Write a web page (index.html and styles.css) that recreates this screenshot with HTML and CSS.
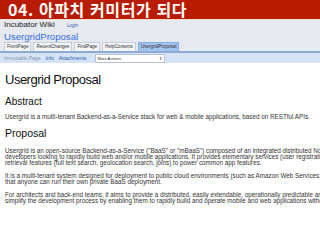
FILE: index.html
```html
<!DOCTYPE html>
<html lang="ko">
<head>
  <meta charset="UTF-8">
  <meta name="viewport" content="width=device-width, initial-scale=1.0">
  <title>04. 아파치 커미터가 되다</title>
  <link rel="stylesheet" href="styles.css">
</head>
<body>
  <div class="banner">04. 아파치 커미터가 되다</div>
  <div class="wiki-header">
    <div class="site">Incubator Wiki <a class="login">Login</a></div>
    <div class="pagename">UsergridProposal</div>
    <ul class="tabs">
      <li>FrontPage</li>
      <li>RecentChanges</li>
      <li>FindPage</li>
      <li>HelpContents</li>
      <li class="current">UsergridProposal</li>
    </ul>
  </div>
  <div class="actions">
    <span class="muted">Immutable Page</span>
    <a>Info</a>
    <a>Attachments</a>
    <div class="select">More Actions:<span class="arrow">&#8661;</span></div>
  </div>
  <div class="content">
    <h1>Usergrid Proposal</h1>
    <h2>Abstract</h2>
    <p>Usergrid is a multi-tenant Backend-as-a-Service stack for web &amp; mobile applications, based on RESTful APIs.</p>
    <h2 class="big">Proposal</h2>
    <p>Usergrid is an open-source Backend-as-a-Service ("BaaS" or "mBaaS") composed of an integrated distributed NoSQL database, application layer and client tooling<br>
    developers looking to rapidly build web and/or mobile applications. It provides elementary services (user registration &amp; management, data storage, file storage, queues,<br>
    retrieval features (full text search, geolocation search, joins) to power common app features.</p>
    <p>It is a multi-tenant system designed for deployment to public cloud environments (such as Amazon Web Services, Rackspace, etc.) or to run on traditional server infrastructure<br>
    that anyone can run their own private BaaS deployment.</p>
    <p>For architects and back-end teams, it aims to provide a distributed, easily extendable, operationally predictable and highly scalable solution. For front-end developers, it aims to<br>
    simplify the development process by enabling them to rapidly build and operate mobile and web applications without requiring backend expertise.</p>
  </div>
</body>
</html>
```

FILE: styles.css
```css
body {
  margin: 0;
  width: 320px;
  height: 240px;
  overflow: hidden;
  background: #ffffff;
  font-family: "Liberation Sans", Arial, sans-serif;
  color: #222;
}
a {
  color: #2a5db0;
}
.banner {
  height: 19px;
  overflow: hidden;
  background: #b81c00;
  color: #ffffff;
  font-family: "Noto Sans CJK KR", "Noto Sans", sans-serif;
  font-weight: bold;
  font-size: 16px;
  letter-spacing: 0.6px;
  line-height: 19px;
  padding-left: 8px;
  border-bottom: 1px solid #f3dcd6;
  white-space: nowrap;
}
.wiki-header {
  background: #e6e9f0;
  padding: 0 0 0 4px;
}
.site {
  font-size: 8px;
  line-height: 10px;
  color: #222;
}
.login {
  font-size: 4.5px;
  margin-left: 10px;
}
.pagename {
  font-size: 9.6px;
  line-height: 11px;
  color: #3a6fe0;
}
.tabs {
  display: flex;
  gap: 2px;
  margin: 0;
  padding: 0;
  list-style: none;
}
.tabs li {
  font-size: 4.6px;
  line-height: 8px;
  padding: 0 2px;
  background: #f4f5f8;
  border: 1px solid #c8ccd6;
  border-bottom: none;
  color: #333;
}
.tabs li.current {
  background: #a3c3ef;
  border-color: #8aaee0;
}
.actions {
  display: flex;
  align-items: center;
  gap: 5px;
  height: 10px;
  padding: 0 4px;
  background: #d6e3f6;
  border-top: 2px solid #8eabd6;
  font-size: 5px;
}
.actions a {
  color: #2a5db0;
}
.muted {
  color: #8a93a3;
}
.select {
  display: flex;
  justify-content: space-between;
  width: 64px;
  height: 7px;
  line-height: 7px;
  padding: 0 2px;
  margin-left: 3px;
  background: #ffffff;
  border: 1px solid #b8c0cc;
  border-radius: 1px;
  font-size: 4px;
  color: #333;
}
.arrow {
  font-size: 4px;
}
.content {
  padding: 8px 5px 0;
  white-space: nowrap;
  overflow: hidden;
}
h1 {
  font-weight: normal;
  font-size: 13px;
  letter-spacing: -0.5px;
  line-height: 18px;
  margin: 0 0 7px;
  color: #111;
}
h2 {
  font-weight: normal;
  font-size: 10px;
  line-height: 12px;
  margin: 0 0 6px;
  color: #111;
}
h2.big {
  font-size: 10.5px;
  line-height: 13px;
  margin-bottom: 8px;
}
p {
  font-size: 6.3px;
  line-height: 6px;
  margin: 0 0 7px;
  color: #333;
}
```
